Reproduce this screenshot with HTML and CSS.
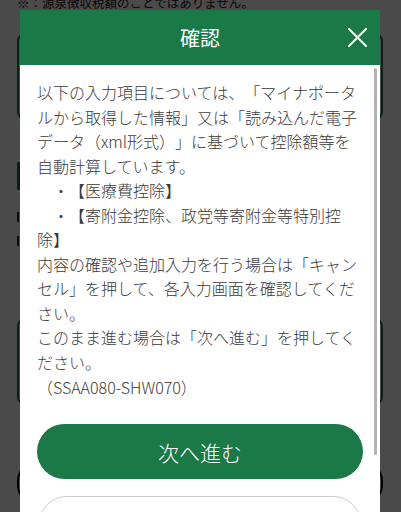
FILE: index.html
```html
<!DOCTYPE html>
<html lang="ja">
<head>
<meta charset="utf-8">
<title>確認</title>
<link rel="stylesheet" href="styles.css">
</head>
<body>
<div class="page">
  <p class="note">※：源泉徴収税額のことではありません。</p>
  <div class="card card-top"></div>
  <div class="heading"></div>
  <div class="marks"><span></span><span></span></div>
  <div class="card card-mid"></div>
  <div class="pill"></div>
</div>
<div class="overlay"></div>
<div class="modal" role="dialog">
  <div class="modal-header">
    <h1 class="modal-title">確認</h1>
    <button class="close" aria-label="閉じる">
      <svg width="19" height="19" viewBox="0 0 19 19"><path d="M1 1 L18 18 M18 1 L1 18" stroke="#fff" stroke-width="2" stroke-linecap="round" fill="none"/></svg>
    </button>
  </div>
  <div class="modal-body">
    <p class="message">以下の入力項目については、「マイナポータルから取得した情報」又は「読み込んだ電子データ（xml形式）」に基づいて控除額等を自動計算しています。<br>　・【医療費控除】<br>　・【寄附金控除、政党等寄附金等特別控除】<br>内容の確認や追加入力を行う場合は「キャンセル」を押して、各入力画面を確認してください。<br>このまま進む場合は「次へ進む」を押してください。<br>（SSAA080-SHW070）</p>
    <div class="actions">
      <button class="btn btn-primary">次へ進む</button>
      <button class="btn btn-secondary">キャンセル</button>
    </div>
    <div class="scrollbar"></div>
  </div>
</div>
</body>
</html>
```

FILE: styles.css
```css
html, body {
  margin: 0;
  padding: 0;
}
body {
  width: 401px;
  height: 512px;
  overflow: hidden;
  background: #fff;
  font-family: "Noto Sans CJK JP", "Noto Sans", sans-serif;
  position: relative;
  text-spacing-trim: space-all;
}
.page {
  padding: 0 18px 0 17px;
  display: flex;
  flex-direction: column;
}
.note {
  margin: -4px 0 0;
  font-size: 12.5px;
  line-height: 14px;
  color: #222;
  white-space: nowrap;
}
.card {
  border: 2px solid #1b7847;
  border-radius: 8px;
  box-sizing: border-box;
  height: 87px;
}
.card-top {
  margin-top: 23px;
}
.heading {
  margin-top: 42px;
  height: 28px;
  border-left: 3px solid #1b7847;
}
.marks {
  margin-top: 22px;
  display: flex;
  flex-direction: column;
  gap: 14px;
}
.marks span {
  display: block;
  width: 2px;
  height: 10px;
  background: #333;
}
.card-mid {
  margin-top: 72px;
}
.pill {
  margin-top: 56px;
  height: 40px;
  border: 2px solid #000;
  border-radius: 20px;
}
.overlay {
  position: absolute;
  inset: 0;
  background: rgba(0, 0, 0, 0.71);
}
.modal {
  position: absolute;
  left: 20px;
  top: 10px;
  width: 360px;
  height: 520px;
  background: #fff;
  overflow: hidden;
}
.modal-header {
  position: relative;
  height: 55px;
  background: #1b7847;
  display: flex;
  align-items: center;
  justify-content: center;
}
.modal-title {
  margin: 0;
  font-size: 20px;
  font-weight: normal;
  color: #fff;
  line-height: 1;
}
.close {
  position: absolute;
  right: 13px;
  top: 18px;
  width: 19px;
  height: 19px;
  padding: 0;
  border: 0;
  background: none;
  display: flex;
}
.modal-body {
  position: relative;
  padding: 15px 19px 0 17px;
}
.message {
  margin: 0;
  font-size: 16px;
  font-weight: 300;
  line-height: 24.55px;
  color: #3a3a3a;
  width: 324px;
}
.actions {
  margin-top: 25px;
  display: flex;
  flex-direction: column;
  gap: 17px;
}
.btn {
  height: 55px;
  width: 326px;
  border-radius: 28px;
  font-family: inherit;
  font-size: 21px;
  font-weight: 300;
  padding: 0;
}
.btn-primary {
  background: #1b7847;
  border: 0;
  color: #fff;
}
.btn-secondary {
  background: #fff;
  border: 1px solid #ccc;
  color: #1b7847;
  margin: 0 2px;
  width: 322px;
}
.scrollbar {
  position: absolute;
  left: 354px;
  top: 3px;
  width: 3px;
  height: 387px;
  border-radius: 2px;
  background: #b3b3b3;
}
```
